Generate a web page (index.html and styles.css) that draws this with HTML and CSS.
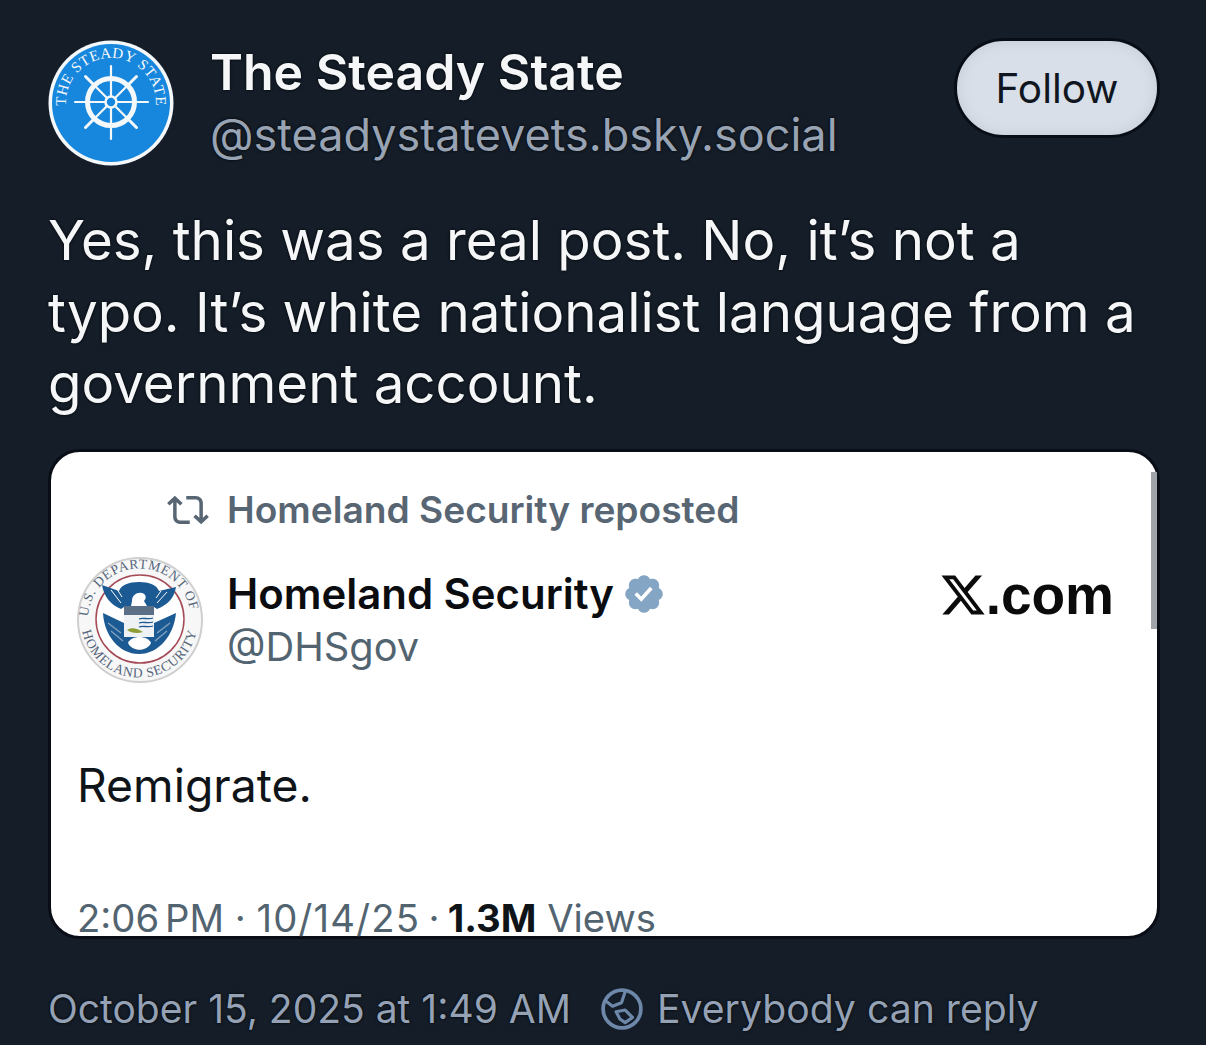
FILE: index.html
```html
<!DOCTYPE html>
<html lang="en">
<head>
<meta charset="utf-8">
<title>The Steady State</title>
<link rel="stylesheet" href="styles.css">
</head>
<body>
<main class="post">
  <header class="author">
    <svg class="avatar" viewBox="0 0 126 126" aria-hidden="true">
      <defs>
        <path id="arcTop" d="M20.600 78 A45 45 0 1 1 105.400 78"/>
      </defs>
      <circle cx="63" cy="63" r="62.500" fill="#f4f8fb"/>
      <circle cx="63" cy="63" r="59" fill="#1787dd"/>
      <text class="seal-text-blue"><textPath href="#arcTop" startOffset="50%" text-anchor="middle">THE STEADY STATE</textPath></text>
      <g stroke="#f4f8fb" fill="none" stroke-linecap="round">
        <circle cx="63" cy="62" r="23.500" stroke-width="5"/>
        <circle cx="63" cy="62" r="5.500" stroke-width="2.600"/>
        <g stroke-width="2.200">
          <path d="M63 26V56M63 68V99M27 62H57M69 62H100"/>
          <path d="M46 45L59 58M67 66L80 79M80 45L67 58M59 66L46 79"/>
          <path d="M37.500 36.500L46 45M88.500 36.500L80 45M37.500 87.500L46 79M88.500 87.500L80 79" stroke-width="3"/>
        </g>
      </g>
    </svg>
    <div class="names">
      <div class="display-name">The Steady State</div>
      <div class="handle">@steadystatevets.bsky.social</div>
    </div>
    <button class="follow">Follow</button>
  </header>

  <p class="body-text">Yes, this was a real post. No, it’s not a<br>typo. It’s white nationalist language from a<br>government account.</p>

  <section class="shot">
    <div class="scrollbar"></div>
    <div class="repost-line">
      <svg class="repost-icon" viewBox="0 0 24 24" aria-hidden="true"><path d="M4.500 3.880l4.432 4.140-1.364 1.460L5.500 7.550V16c0 1.100.896 2 2 2H13v2H7.500c-2.209 0-4-1.790-4-4V7.550L1.432 9.480.068 8.020 4.500 3.880zM16.500 6H11V4h5.500c2.209 0 4 1.790 4 4v8.450l2.068-1.930 1.364 1.460-4.432 4.140-4.432-4.140 1.364-1.460 2.068 1.930V8c0-1.100-.896-2-2-2z"/></svg>
      <span>Homeland Security reposted</span>
    </div>
    <div class="tweet-head">
      <svg class="seal" viewBox="0 0 126 126" aria-hidden="true">
        <defs>
          <path id="sealTop" d="M11 66 A51.500 51.500 0 0 1 114 60"/>
          <path id="sealBottom" d="M4 62 A58.500 58.500 0 0 0 121 62"/>
        </defs>
        <circle cx="63" cy="63" r="62" fill="#f7f7f7" stroke="#cfcfcf" stroke-width="2"/>
        <text class="seal-text"><textPath href="#sealTop" startOffset="50%" text-anchor="middle">U.S. DEPARTMENT OF</textPath></text>
        <text class="seal-text"><textPath href="#sealBottom" startOffset="50%" text-anchor="middle">HOMELAND SECURITY</textPath></text>
        <circle cx="63" cy="62" r="44" fill="#fff" stroke="#a54a57" stroke-width="1.500"/>
        <path fill="#1c5a94" d="M25 28L42 34C44 28 52 25 62 25C72 25 80 28 82 34L99 30C97 42 90 48 80 52L77 50H47L44 52C34 48 27 40 25 28Z"/>
        <path fill="none" stroke="#fff" stroke-width="1" d="M34 33L44 46M40 32L45 40M90 35L80 46M84 34L79 41"/>
        <path fill="#fff" d="M55 44C55 38 60 35 65 36C69 37 70 41 67 44L70 49H54Z"/>
        <path fill="#1c5a94" d="M26 56L47 66V80H77V66L99 56C97 78 82 97 62 97C42 97 27 78 26 56Z"/>
        <path fill="none" stroke="#7f9fbd" stroke-width="1.500" d="M31 66L44 76M34 74L46 84M93 66L80 76M90 74L78 84"/>
        <rect x="47" y="49" width="30" height="9" fill="#5b6f86"/>
        <path fill="#eef2f4" d="M47 58H77V80H47Z"/>
        <path fill="none" stroke="#1c5a94" stroke-width="1.300" d="M62 62C66 60 71 63 76 61M62 66C66 64 71 67 76 65M62 70C66 68 71 71 76 69"/>
        <path fill="#fff" d="M51 86C54 78 71 78 74 86C70 95 55 95 51 86Z"/>
        <path fill="#8f9d36" d="M50 73C54 70 60 71 66 75C60 77 54 76 50 73Z"/>
      </svg>
      <div class="tweet-names">
        <div class="tweet-name">Homeland Security
          <svg class="badge" viewBox="0 0 24 24" aria-hidden="true"><path d="M22.250 12c0-1.430-.880-2.670-2.190-3.340.460-1.390.200-2.900-.810-3.910s-2.520-1.270-3.910-.810c-.660-1.310-1.910-2.190-3.340-2.190s-2.670.880-3.330 2.190c-1.400-.460-2.910-.200-3.920.810s-1.260 2.520-.800 3.910c-1.310.670-2.200 1.910-2.200 3.340s.890 2.670 2.200 3.340c-.460 1.390-.210 2.900.800 3.910s2.520 1.260 3.910.810c.670 1.310 1.910 2.190 3.340 2.190s2.680-.880 3.340-2.190c1.390.450 2.900.200 3.910-.810s1.270-2.520.810-3.910c1.310-.670 2.190-1.910 2.190-3.340zm-11.710 4.200L6.800 12.460l1.410-1.420 2.260 2.260 4.800-5.230 1.470 1.360-6.200 6.770z"/></svg>
        </div>
        <div class="tweet-handle">@DHSgov</div>
      </div>
      <div class="xcom">
        <svg class="xlogo" viewBox="1 2 22.500 20" aria-hidden="true"><path d="M18.244 2.250h3.308l-7.227 8.260 8.502 11.240H16.170l-5.214-6.817L4.990 21.750H1.680l7.730-8.835L1.254 2.250H8.080l4.713 6.231zm-1.161 17.520h1.833L7.084 4.126H5.117z"/></svg><span>.com</span>
      </div>
    </div>
    <div class="tweet-text">Remigrate.</div>
    <div class="tweet-meta"><span class="tweet-time">2:06 PM</span> · <span class="tweet-date">10/14/25</span><span class="tweet-sep"> · </span><b>1.3M</b> Views</div>
  </section>

  <footer class="meta">
    <span>October 15, 2025 at 1:49 AM</span>
    <span class="reply">
      <svg class="globe" viewBox="0 0 40 40" aria-hidden="true">
        <circle cx="20" cy="20" r="18" fill="none" stroke="#6d88a8" stroke-width="3.500"/>
        <path fill="none" stroke="#6d88a8" stroke-width="3" stroke-linejoin="round" d="M4 12L11 17.400L19.500 14L23 3.500M14.400 22.600L23 21L30 28L23 33L18 29.500Z"/>
      </svg>
      <span>Everybody can reply</span>
    </span>
  </footer>
</main>
</body>
</html>
```
FILE: styles.css
```css
html, body {
  margin: 0;
  padding: 0;
  background: #141d28;
}
body {
  width: 1206px;
  height: 1045px;
  overflow: hidden;
  font-family: Inter, "Liberation Sans", sans-serif;
}
.post {
  display: flex;
  flex-direction: column;
  padding: 38px 46px 0 48px;
}
.author {
  display: flex;
  align-items: flex-start;
}
.avatar {
  width: 126px;
  height: 126px;
  margin-top: 2px;
  flex: none;
}
.seal-text-blue {
  font-family: "Liberation Serif", serif;
  font-size: 15px;
  letter-spacing: 0.5px;
  fill: #f4f8fb;
}
.names {
  flex: 1;
  margin-left: 36px;
  margin-top: -2px;
  display: flex;
  flex-direction: column;
  gap: 2px;
}
.display-name {
  font-size: 50px;
  line-height: 72px;
  font-weight: 600;
  color: #f4f6f8;
  text-shadow: 0 0 3px #000;
}
.handle {
  font-size: 45px;
  line-height: 50px;
  color: #98a3b4;
  text-shadow: 0 0 3px #000;
}
.follow {
  width: 206px;
  height: 100px;
  margin: 0 0 0 0;
  border: 3px solid #090e16;
  border-radius: 50px;
  background: #d8dfe8;
  box-shadow: inset 0 0 14px #c4cbd6;
  color: #10161f;
  font-family: inherit;
  font-size: 40.500px;
  font-weight: 400;
}
.body-text {
  margin: 39px 0 0 0;
  font-size: 54.650px;
  line-height: 71.500px;
  color: #f4f6f8;
  text-shadow: 0 0 3px #000;
}
.shot {
  position: relative;
  box-sizing: border-box;
  margin: 29px 0 0 0;
  width: 1112px;
  height: 490px;
  border: 3px solid #090e16;
  border-radius: 32px;
  background: #fff;
  padding: 0 0 0 26px;
}
.scrollbar {
  position: absolute;
  right: 0;
  top: 20px;
  width: 6px;
  height: 157px;
  background: #a0a3a8;
}
.repost-line {
  display: flex;
  align-items: center;
  gap: 18px;
  margin: 35px 0 0 90px;
  height: 46px;
  font-size: 37.150px;
  font-weight: 600;
  color: #586674;
}
.repost-icon {
  width: 42px;
  height: 42px;
  fill: #586674;
}
.tweet-head {
  display: flex;
  align-items: flex-start;
  margin-top: 24px;
}
.seal {
  width: 126px;
  height: 126px;
  flex: none;
}
.seal-text {
  font-family: "Liberation Serif", serif;
  font-size: 13.500px;
  letter-spacing: 0.7px;
  fill: #55657a;
}
.tweet-names {
  flex: 1;
  margin-left: 24px;
  margin-top: 11px;
}
.tweet-name {
  display: flex;
  align-items: center;
  gap: 8px;
  height: 52px;
  font-size: 41.900px;
  font-weight: 600;
  color: #0a0c10;
}
.badge {
  width: 44px;
  height: 44px;
  fill: #84a5c4;
}
.tweet-handle {
  margin-top: 2px;
  font-size: 39.800px;
  line-height: 50px;
  color: #536471;
}
.xcom {
  display: flex;
  align-items: flex-end;
  margin: 13px 43px 0 0;
  font-size: 55px;
  line-height: 50px;
  font-weight: 700;
  font-family: "Liberation Sans", sans-serif;
  color: #0b0b0b;
}
.xlogo {
  width: 45px;
  height: 42px;
  margin-bottom: 4px;
  fill: #0b0b0b;
}
.tweet-text {
  margin-top: 74px;
  font-size: 46.300px;
  line-height: 56px;
  color: #0f1419;
}
.tweet-meta {
  margin-top: 88px;
  font-size: 38.250px;
  line-height: 34px;
  color: #536471;
}
.tweet-time {
  word-spacing: -5px;
}
.tweet-date {
  letter-spacing: 1.200px;
}
.tweet-sep {
  word-spacing: -2.500px;
}
.tweet-meta b {
  color: #0f1419;
  font-weight: 700;
}
.meta {
  display: flex;
  align-items: center;
  gap: 30px;
  margin-top: 45px;
  height: 50px;
  font-size: 39px;
  color: #95a2b6;
  text-shadow: 0 0 3px #000;
}
.reply {
  display: flex;
  align-items: center;
  gap: 14px;
  font-size: 39.200px;
}
.globe {
  width: 42px;
  height: 42px;
}
```
